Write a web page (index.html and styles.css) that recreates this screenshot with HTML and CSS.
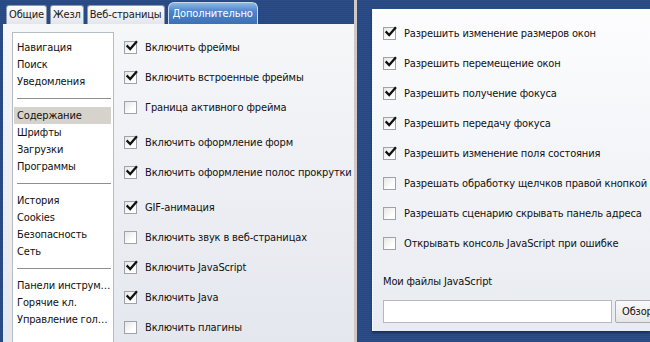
FILE: index.html
```html
<!DOCTYPE html>
<html lang="ru">
<head>
  <meta charset="UTF-8" />
  <title>Настройки</title>
  <link rel="stylesheet" href="styles.css">
</head>
<body>
  <div class="screen">
    <!-- окно настроек -->
    <section class="prefs">
      <nav class="tabs">
        <span class="tab">Общие</span>
        <span class="tab">Жезл</span>
        <span class="tab">Веб-страницы</span>
        <span class="tab active">Дополнительно</span>
      </nav>
      <div class="page">
        <ul class="sections">
          <li>Навигация</li>
          <li>Поиск</li>
          <li>Уведомления</li>
          <li class="sep"></li>
          <li class="sel">Содержание</li>
          <li>Шрифты</li>
          <li>Загрузки</li>
          <li>Программы</li>
          <li class="sep"></li>
          <li>История</li>
          <li>Cookies</li>
          <li>Безопасность</li>
          <li>Сеть</li>
          <li class="sep"></li>
          <li>Панели инструм…</li>
          <li>Горячие кл.</li>
          <li>Управление гол…</li>
        </ul>
        <div class="opts">
          <label class="row"><span class="cb on"></span>Включить фреймы</label>
          <label class="row"><span class="cb on"></span>Включить встроенные фреймы</label>
          <label class="row"><span class="cb"></span>Граница активного фрейма</label>
          <label class="row group"><span class="cb on"></span>Включить оформление форм</label>
          <label class="row"><span class="cb on"></span>Включить оформление полос прокрутки</label>
          <label class="row group"><span class="cb on"></span>GIF-анимация</label>
          <label class="row"><span class="cb"></span>Включить звук в веб-страницах</label>
          <label class="row"><span class="cb on"></span>Включить JavaScript</label>
          <label class="row"><span class="cb on"></span>Включить Java</label>
          <label class="row"><span class="cb"></span>Включить плагины</label>
        </div>
      </div>
    </section>

    <div class="split"></div>

    <!-- диалог JavaScript -->
    <section class="desk">
      <div class="dialog">
        <label class="row"><span class="cb on"></span>Разрешить изменение размеров окон</label>
        <label class="row"><span class="cb on"></span>Разрешить перемещение окон</label>
        <label class="row"><span class="cb on"></span>Разрешить получение фокуса</label>
        <label class="row"><span class="cb on"></span>Разрешить передачу фокуса</label>
        <label class="row"><span class="cb on"></span>Разрешить изменение поля состояния</label>
        <label class="row"><span class="cb"></span>Разрешать обработку щелчков правой кнопкой</label>
        <label class="row"><span class="cb"></span>Разрешать сценарию скрывать панель адреса</label>
        <label class="row"><span class="cb"></span>Открывать консоль JavaScript при ошибке</label>
        <div class="files-label">Мои файлы JavaScript</div>
        <div class="files">
          <span class="field"></span>
          <span class="btn">Обзор...</span>
        </div>
      </div>
    </section>
  </div>

  <script>
    // галочки рисуем одним svg
    const CHECK = '<svg width="13" height="13" viewBox="0 0 13 13"><path d="M2.5 6.2 L5.2 9 L11.2 2.2" fill="none" stroke="#111" stroke-width="2.3" stroke-linecap="square"/></svg>';
    document.querySelectorAll(".cb.on").forEach(cb => {
      cb.innerHTML = CHECK;
    });
  </script>
</body>
</html>
```

FILE: styles.css
```css
* {
  box-sizing: border-box;
}
html, body {
  margin: 0;
  width: 650px;
  height: 342px;
  overflow: hidden;
}
body {
  font-family: "DejaVu Sans", "Liberation Sans", sans-serif;
  font-stretch: condensed;
  font-size: 11px;
  letter-spacing: -0.15px;
  color: #111;
  background: repeating-linear-gradient(#2c4e88 0, #2c4e88 1px, #284780 1px, #284780 2px);
}
.screen {
  display: flex;
  height: 342px;
}

/* окно настроек */
.prefs {
  flex: none;
  width: 354px;
  display: flex;
  flex-direction: column;
  padding-left: 3px;
  overflow: hidden;
}
.tabs {
  height: 27px;
  display: flex;
  align-items: flex-end;
  gap: 3px;
  padding-left: 3px;
}
.tab {
  height: 19px;
  padding: 0 2px;
  line-height: 18px;
  background: linear-gradient(#fbfbfc, #e3e6ec);
  border: 1px solid #8a98b0;
  border-bottom: none;
  border-radius: 3px 3px 0 0;
  color: #1a1a1a;
}
.tab.active {
  height: 22px;
  line-height: 21px;
  padding: 0 4px;
  color: #fff;
  background: linear-gradient(#8fb6e6, #4e84c8 40%, #3d71b6);
  border-color: #c9d8ee;
  border-radius: 6px 6px 0 0;
}
.page {
  flex: 1;
  display: flex;
  background: linear-gradient(#f6f7f9, #e4e7ee);
  padding: 8px 0 0 9px;
}
.sections {
  flex: none;
  list-style: none;
  margin: 0;
  padding: 6px 2px 0 1px;
  width: 102px;
  background: #fff;
  border: 1px solid #b8bcc4;
  border-bottom: none;
}
.sections li {
  height: 17px;
  line-height: 17px;
  padding-left: 3px;
  white-space: nowrap;
}
.sections li.sel {
  background: #d6d3cd;
}
.sections li.sep {
  display: flex;
  align-items: center;
}
.sections li.sep::after {
  content: "";
  flex: 1;
  border-top: 1px solid #8f8f8f;
}
.opts {
  padding: 0 0 0 10px;
}
.row {
  display: flex;
  align-items: center;
  height: 30px;
  gap: 8px;
  white-space: nowrap;
}
.opts .row.group {
  margin-top: 5px;
}
.cb {
  width: 13px;
  height: 13px;
  flex: none;
  border: 1px solid #9ea3ab;
  background: linear-gradient(135deg, #e6e6e2, #fff 70%);
  position: relative;
}
.cb svg {
  position: absolute;
  left: 0;
  top: -2px;
}

.split {
  flex: none;
  width: 3px;
  background: #cfc8c4;
}

/* диалог */
.desk {
  flex: 1;
  min-width: 0;
  padding: 9px 0 11px 15px;
}
.dialog {
  height: 100%;
  background: linear-gradient(#fdfdfe, #e8ebf1);
  border-left: 1px solid #f4f6fa;
  box-shadow: 0 2px 2px #1a2f55;
  padding: 9px 0 0 10px;
}
.files-label {
  margin-top: 15px;
  height: 18px;
  line-height: 18px;
}
.files {
  display: flex;
  gap: 3px;
  margin-top: 9px;
}
.field {
  flex: none;
  width: 229px;
  height: 23px;
  background: #fff;
  border: 1px solid #b4b8c0;
}
.btn {
  flex: none;
  height: 23px;
  line-height: 21px;
  padding: 0 6px;
  border: 1px solid #a8acb4;
  border-radius: 2px;
  background: linear-gradient(#fafafa, #e6e6e6);
}
```
